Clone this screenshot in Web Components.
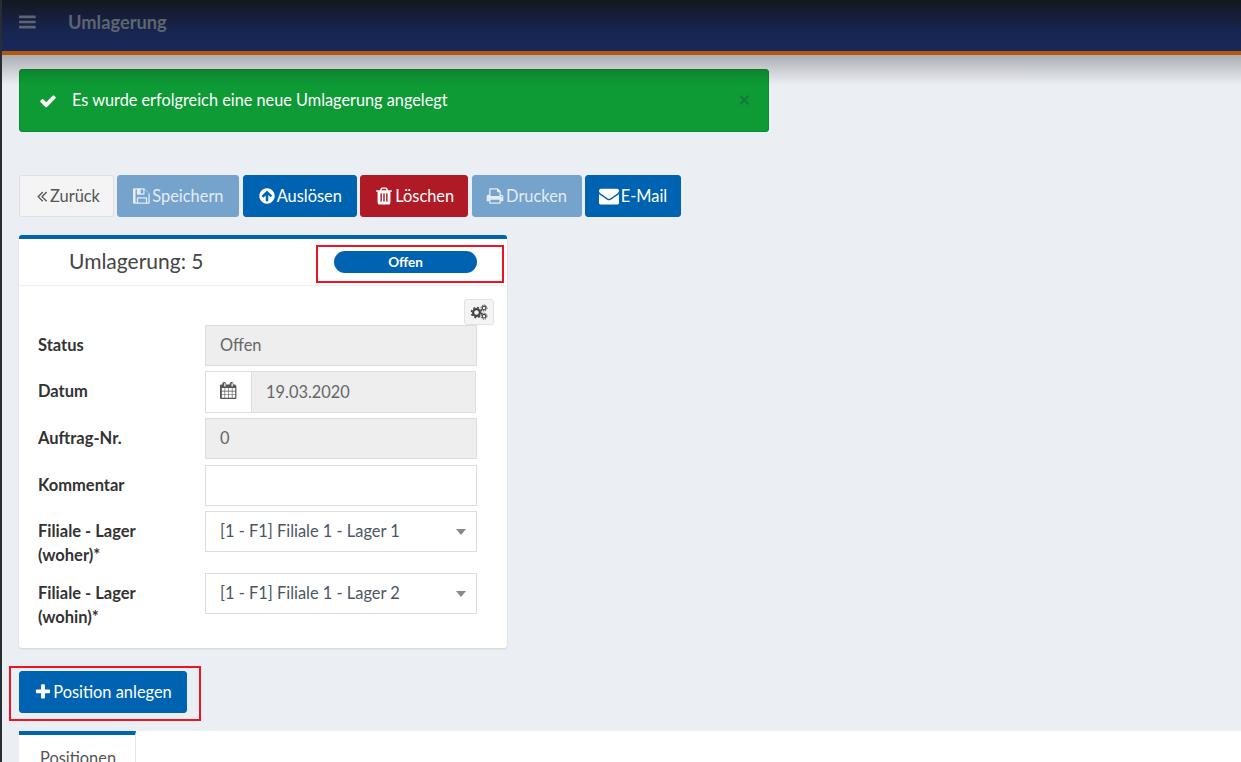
<!DOCTYPE html>
<html lang="de">
<head>
<meta charset="utf-8">
<title>Umlagerung</title>
<style>
  html, body { margin: 0; height: 100%; overflow: hidden; }
  body { font: 16.4px/24px Lato, "Noto Sans", sans-serif; color: #333; background: #ebeef3; }
  .bar { display: flex; gap: 3.4px; }
  .add { position: relative; width: 168px; height: 42px; }
</style>
</head>
<body>
<app-shell>
  <app-header slot="header" title-text="Umlagerung"></app-header>
  <alert-box>Es wurde erfolgreich eine neue Umlagerung angelegt</alert-box>
  <div slot="actions" class="bar">
    <action-button kind="light" icon="angles" w="95" gap="-1">Zurück</action-button>
    <action-button kind="muted" icon="save" w="122">Speichern</action-button>
    <action-button kind="primary" icon="up" w="114">Auslösen</action-button>
    <action-button kind="danger" icon="trash" w="108" size="20">Löschen</action-button>
    <action-button kind="muted" icon="print" w="110" gap="2">Drucken</action-button>
    <action-button kind="primary" icon="mail" w="96" size="20" gap="2">E-Mail</action-button>
  </div>
  <doc-card slot="card" heading="Umlagerung: 5" status="Offen">
    <form-row label="Status"><text-field readonly>Offen</text-field></form-row>
    <form-row label="Datum"><text-field readonly addon style="height:42px;width:271px">19.03.2020</text-field></form-row>
    <form-row label="Auftrag-Nr." style="margin-bottom:6px"><text-field readonly>0</text-field></form-row>
    <form-row label="Kommentar"><text-field></text-field></form-row>
    <form-row label="Filiale - Lager (woher)*"><text-field select>[1 - F1] Filiale 1 - Lager 1</text-field></form-row>
    <form-row label="Filiale - Lager (wohin)*"><text-field select>[1 - F1] Filiale 1 - Lager 2</text-field></form-row>
  </doc-card>
  <div slot="add" class="add">
    <action-button kind="primary" icon="plus" w="168">Position anlegen</action-button>
    <red-mark></red-mark>
  </div>
  <tab-strip slot="tabs" label="Positionen"></tab-strip>
</app-shell>

<script>
  // font awesome 4 outlines, 1792 box
  const ICONS = {
    bars: "M1664 1344v128q0 26-19 45t-45 19H64q-26 0-45-19t-19-45v-128q0-26 19-45t45-19h1536q26 0 45 19t19 45zm0-512v128q0 26-19 45t-45 19H64q-26 0-45-19t-19-45V832q0-26 19-45t45-19h1536q26 0 45 19t19 45zm0-512v128q0 26-19 45t-45 19H64q-26 0-45-19t-19-45V320q0-26 19-45t45-19h1536q26 0 45 19t19 45z",
    check: "M1671 566q0 40-28 68l-724 724-136 136q-28 28-68 28t-68-28l-136-136-362-362q-28-28-28-68t28-68l136-136q28-28 68-28t68 28l294 295 656-657q28-28 68-28t68 28l136 136q28 28 28 68z",
    plus: "M1600 736v192q0 40-28 68t-68 28h-416v416q0 40-28 68t-68 28h-192q-40 0-68-28t-28-68v-416h-416q-40 0-68-28t-28-68v-192q0-40 28-68t68-28h416v-416q0-40 28-68t68-28h192q40 0 68 28t28 68v416h416q40 0 68 28t28 68z",
    angles: "M1011 1376q0 13-10 23l-50 50q-10 10-23 10t-23-10l-466-466q-10-10-10-23t10-23l466-466q10-10 23-10t23 10l50 50q10 10 10 23t-10 23l-393 393 393 393q10 10 10 23zm384 0q0 13-10 23l-50 50q-10 10-23 10t-23-10l-466-466q-10-10-10-23t10-23l466-466q10-10 23-10t23 10l50 50q10 10 10 23t-10 23l-393 393 393 393q10 10 10 23z",
    save: "M512 1536h768v-384H512v384zm896 0h128V640q0-14-10-38.5t-20-34.5l-281-281q-10-10-34-20t-39-10v416q0 40-28 68t-68 28H480q-40 0-68-28t-28-68V256H256v1280h128V1120q0-40 28-68t68-28h832q40 0 68 28t28 68v416zM1024 608V288q0-13-9.5-22.5T992 256H800q-13 0-22.5 9.5T768 288v320q0 13 9.5 22.5T800 640h192q13 0 22.5-9.5t9.5-22.5zm640 32v928q0 40-28 68t-68 28H96q-40 0-68-28t-28-68V224q0-40 28-68t68-28h928q40 0 88 20t76 48l280 280q28 28 48 76t20 88z",
    up: "M1412 895q0-27-18-45l-91-91-362-362q-18-18-45-18t-45 18l-362 362-91 91q-18 18-18 45t18 45l91 91q18 18 45 18t45-18l189-189v502q0 26 19 45t45 19h128q26 0 45-19t19-45V784l189 189q19 19 45 19t45-19l91-91q18-18 18-45zm252 1q0 209-103 385.5T1281.5 1561 896 1664t-385.5-103T231 1281.5 128 896t103-385.5T510.5 231 896 128t385.5 103T1561 510.5 1664 896z",
    trash: "M704 1376V672q0-14-9-23t-23-9h-64q-14 0-23 9t-9 23v704q0 14 9 23t23 9h64q14 0 23-9t9-23zm256 0V672q0-14-9-23t-23-9h-64q-14 0-23 9t-9 23v704q0 14 9 23t23 9h64q14 0 23-9t9-23zm256 0V672q0-14-9-23t-23-9h-64q-14 0-23 9t-9 23v704q0 14 9 23t23 9h64q14 0 23-9t9-23zM672 384h448l-48-117q-7-9-17-11H738q-10 2-17 11zm928 32v64q0 14-9 23t-23 9h-96v948q0 83-47 143.5t-113 60.5H480q-66 0-113-58.5T320 1464V512h-96q-14 0-23-9t-9-23v-64q0-14 9-23t23-9h309l70-167q15-37 54-63t79-26h320q40 0 79 26t54 63l70 167h309q14 0 23 9t9 23z",
    print: "M448 1536h896v-256H448v256zm0-640h896V512h-160q-40 0-68-28t-28-68V256H448v640zm1152 64q0-26-19-45t-45-19-45 19-19 45 19 45 45 19 45-19 19-45zm128 0v416q0 13-9.5 22.5t-22.5 9.5h-224v160q0 40-28 68t-68 28H416q-40 0-68-28t-28-68v-160H96q-13 0-22.5-9.5T64 1376V960q0-79 56.5-135.5T256 768h64V224q0-40 28-68t68-28h672q40 0 88 20t76 48l152 152q28 28 48 76t20 88v256h64q79 0 135.5 56.5T1728 960z",
    mail: "M1792 710v794q0 66-47 113t-113 47H160q-66 0-113-47T0 1504V710q44 49 101 87 362 246 497 345 57 42 92.5 65.5t94.5 48 110 24.5h2q51 0 110-24.5t94.5-48 92.5-65.5q170-123 498-345 57-39 100-87zm0-294q0 79-49 151t-122 123q-376 261-468 325-10 7-42.5 30.5t-54 38-52 32.5-57.5 27-50 9h-2q-23 0-50-9t-57.5-27-52-32.5-54-38T639 1015q-91-64-262-182.5T172 690q-62-42-117-115.5T0 438q0-78 41.5-130T160 256h1472q65 0 112.5 47t47.5 113z",
    calendar: "M192 1664h288v-288H192v288zm352 0h320v-288H544v288zm-352-352h288V992H192v320zm352 0h320V992H544v320zM192 928h288V640H192v288zm736 736h320v-288H928v288zM544 928h320V640H544v288zm768 736h288v-288h-288v288zm-384-352h320V992H928v320zM576 448V160q0-13-9.5-22.5T544 128h-64q-13 0-22.5 9.5T448 160v288q0 13 9.5 22.5T480 480h64q13 0 22.5-9.5T576 448zm736 864h288V992h-288v320zM928 928h320V640H928v288zm384 0h288V640h-288v288zm32-480V160q0-13-9.5-22.5T1312 128h-64q-13 0-22.5 9.5T1216 160v288q0 13 9.5 22.5t22.5 9.5h64q13 0 22.5-9.5t9.5-22.5zm384-64v1280q0 52-38 90t-90 38H128q-52 0-90-38t-38-90V384q0-52 38-90t90-38h128v-96q0-66 47-113T416 0h64q66 0 113 47t47 113v96h384v-96q0-66 47-113t113-47h64q66 0 113 47t47 113v96h128q52 0 90 38t38 90z"
  };
  const icon = (name, size) =>
    `<svg width="${size}" height="${size}" viewBox="0 0 1792 1792" fill="currentColor" aria-hidden="true"><path d="${ICONS[name]}"/></svg>`;

  class AppShell extends HTMLElement {
    constructor() {
      super();
      this.attachShadow({ mode: "open" }).innerHTML = `
        <style>
          :host { display: flex; flex-direction: column; height: 100vh; box-sizing: border-box; border-left: 2px solid #262d33; overflow: hidden; }
          main { flex: 1; display: flex; flex-direction: column; padding: 14px 0 0 17px; }
          .actions { margin-top: 43px; }
          .card { margin-top: 18px; }
          .add { margin-top: 23px; }
          .tabs { margin-top: 18px; flex: 1; }
        </style>
        <slot name="header"></slot>
        <main>
          <slot></slot>
          <div class="actions"><slot name="actions"></slot></div>
          <div class="card"><slot name="card"></slot></div>
          <div class="add"><slot name="add"></slot></div>
          <div class="tabs"><slot name="tabs"></slot></div>
        </main>`;
    }
  }

  class AppHeader extends HTMLElement {
    constructor() {
      super();
      this.attachShadow({ mode: "open" }).innerHTML = `
        <style>
          :host { display: block; position: relative; z-index: 5; }
          header { height: 51px; box-sizing: border-box; display: flex; align-items: center; gap: 31px; padding: 0 0 7px 17px;
            background: linear-gradient(#14181f, #172552 32px, #182859); color: #5e6570; }
          .line { height: 4px; background: #b3590f; }
          b { font-size: 18.3px; font-weight: 700; }
          svg { display: block; }
          .shade { position: absolute; left: 0; right: 0; top: 55px; height: 30px; pointer-events: none;
            background: linear-gradient(rgba(0,0,0,.27), rgba(0,0,0,0)); }
        </style>
        <header>${icon("bars", 18)}<b>${this.getAttribute("title-text")}</b></header>
        <div class="line"></div>
        <div class="shade"></div>`;
    }
  }

  class AlertBox extends HTMLElement {
    constructor() {
      super();
      this.attachShadow({ mode: "open" }).innerHTML = `
        <style>
          :host { display: flex; align-items: center; width: 750px; height: 63px; box-sizing: border-box; padding: 0 19px;
            background: #0e9a35; border: 1px solid #0c8a2f; border-radius: 3px; color: #fff; font-size: 16.3px; }
          svg { display: block; margin-right: 15px; flex: none; }
          .text { flex: 1; padding-bottom: 2px; }
          .close { color: #0f7d38; font-size: 20px; font-weight: 700; margin-right: -1px; padding-bottom: 3px; }
        </style>
        ${icon("check", 18)}<span class="text"><slot></slot></span><span class="close">×</span>`;
    }
  }

  const KINDS = {
    primary: "background:#0063b2;border-color:#0063b2;color:#fff",
    muted: "background:#76a3cc;border-color:#76a3cc;color:#e3ecf5",
    danger: "background:#b01a26;border-color:#b01a26;color:#fff",
    light: "background:#f4f4f4;border-color:#dfe0e2;color:#555"
  };

  class ActionButton extends HTMLElement {
    constructor() {
      super();
      const kind = this.getAttribute("kind") || "primary";
      const size = this.getAttribute("size") || 18;
      const gap = this.getAttribute("gap") || 1;
      this.attachShadow({ mode: "open" }).innerHTML = `
        <style>
          :host { display: block; flex: none; }
          button { all: unset; box-sizing: border-box; display: flex; align-items: center; justify-content: center;
            height: 42px; width: ${this.getAttribute("w")}px; padding-bottom: 1px; border: 1px solid; border-radius: 3px; font: inherit; ${KINDS[kind]} }
          svg { display: block; flex: none; margin-right: ${gap}px; }
        </style>
        <button type="button">${icon(this.getAttribute("icon"), size)}<slot></slot></button>`;
    }
  }

  class DocCard extends HTMLElement {
    constructor() {
      super();
      this.attachShadow({ mode: "open" }).innerHTML = `
        <style>
          :host { display: block; width: 488px; background: #fff; border-top: 4px solid #0063b2; border-radius: 3px; box-sizing: border-box;
            box-shadow: 0 1px 2px rgba(0,0,0,.12); }
          .head { position: relative; height: 46px; display: flex; align-items: center; justify-content: space-between; padding: 0 30px 0 50px;
            border-bottom: 1px solid #f1f1f1; }
          h2 { margin: 0 0 2px; font-size: 21px; font-weight: 400; color: #444; }
          .badge { width: 143px; height: 22px; border-radius: 11px; background: #0063b2; color: #fff; font-size: 13.5px; font-weight: 700;
            display: flex; align-items: center; justify-content: center; }
          red-mark { --mark-l: 297px; --mark-t: 6px; --mark-w: 188px; --mark-h: 38px; }
          .body { padding: 13px 13px 13px 19px; }
          .tools { display: flex; justify-content: flex-end; }
          .gear { width: 30px; height: 26px; box-sizing: border-box; background: #f4f4f4; border: 1px solid #e2e2e2; border-radius: 3px; color: #444;
            display: flex; align-items: center; justify-content: center; }
        </style>
        <div class="head">
          <h2>${this.getAttribute("heading")}</h2>
          <span class="badge">${this.getAttribute("status")}</span>
          <red-mark></red-mark>
        </div>
        <div class="body">
          <div class="tools"><span class="gear">
            <svg width="18" height="16" viewBox="0 0 18 16" fill="none" stroke="currentColor">
              <circle cx="6.5" cy="8.5" r="3.4" stroke-width="2.2"/>
              <circle cx="6.5" cy="8.5" r="5" stroke-width="1.6" stroke-dasharray="2 1.93"/>
              <circle cx="14" cy="4" r="1.8" stroke-width="1.2"/>
              <circle cx="14" cy="4" r="3" stroke-width="1" stroke-dasharray="1.3 1.05"/>
              <circle cx="14" cy="12.2" r="1.8" stroke-width="1.2"/>
              <circle cx="14" cy="12.2" r="3" stroke-width="1" stroke-dasharray="1.3 1.05"/>
            </svg></span></div>
          <slot></slot>
        </div>`;
    }
  }

  class FormRow extends HTMLElement {
    constructor() {
      super();
      this.attachShadow({ mode: "open" }).innerHTML = `
        <style>
          :host { display: grid; grid-template-columns: 167px 272px; margin-bottom: 5px; }
          label { font-weight: 700; font-size: 16.5px; color: #333; padding: 8px 40px 1px 0; line-height: 24px; }
        </style>
        <label>${this.getAttribute("label")}</label><div><slot></slot></div>`;
    }
  }

  class TextField extends HTMLElement {
    constructor() {
      super();
      const ro = this.hasAttribute("readonly");
      const sel = this.hasAttribute("select");
      const addon = this.hasAttribute("addon");
      this.attachShadow({ mode: "open" }).innerHTML = `
        <style>
          :host { display: flex; height: 41px; box-sizing: border-box; border: 1px solid #dcdde1; background: #fff; }
          .addon { width: 46px; display: flex; align-items: center; justify-content: center; color: #555; border-right: 1px solid #dcdde1; flex: none; padding-bottom: 3px; box-sizing: border-box; }
          .value { flex: 1; padding: 0 14px 1px; display: flex; align-items: center; justify-content: space-between; color: ${sel ? "#4b5563" : "#666"};
            background: ${ro ? "#eee" : "#fff"}; }
          .caret { width: 0; height: 0; border: 5.5px solid transparent; border-top: 6px solid #888; border-bottom: 0; margin: 1px -4px 0 0; }
        </style>
        ${addon ? `<span class="addon">${icon("calendar", 17)}</span>` : ""}
        <span class="value"><span><slot></slot></span>${sel ? '<i class="caret"></i>' : ""}</span>`;
    }
  }

  // red annotation drawn over the screenshot
  class RedMark extends HTMLElement {
    constructor() {
      super();
      this.attachShadow({ mode: "open" }).innerHTML = `
        <style>
          :host { position: absolute; box-sizing: border-box; border: 2px solid #ee1522; pointer-events: none;
            left: var(--mark-l, -10px); top: var(--mark-t, -5px); width: var(--mark-w, 192px); height: var(--mark-h, 55px); }
        </style>`;
    }
  }

  class TabStrip extends HTMLElement {
    constructor() {
      super();
      this.attachShadow({ mode: "open" }).innerHTML = `
        <style>
          :host { display: flex; height: 100%; }
          .tab { width: 117px; box-sizing: border-box; background: #fff; border-top: 4px solid #0063b2; border-right: 1px solid #e6e6e6; color: #555;
            padding: 11px 0 0 21px; }
          .rest { flex: 1; background: #fff; }
        </style>
        <div class="tab">${this.getAttribute("label")}</div><div class="rest"></div>`;
    }
  }

  customElements.define("app-shell", AppShell);
  customElements.define("app-header", AppHeader);
  customElements.define("alert-box", AlertBox);
  customElements.define("action-button", ActionButton);
  customElements.define("doc-card", DocCard);
  customElements.define("form-row", FormRow);
  customElements.define("text-field", TextField);
  customElements.define("red-mark", RedMark);
  customElements.define("tab-strip", TabStrip);
</script>
</body>
</html>
